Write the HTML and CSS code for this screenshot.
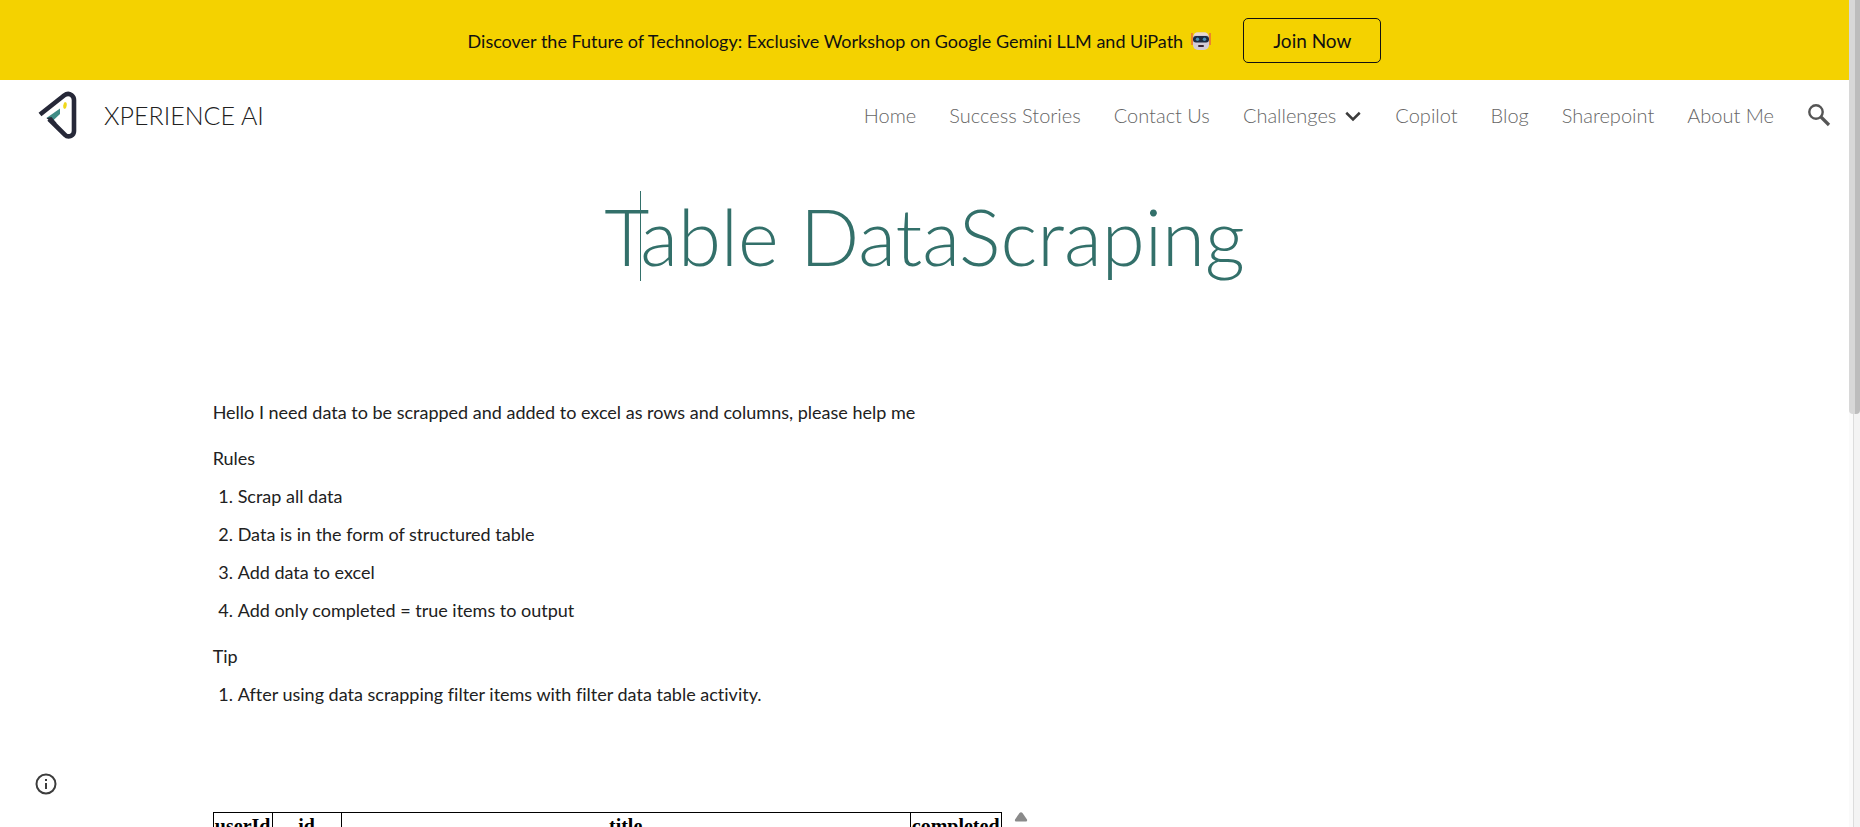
FILE: index.html
```html
<!DOCTYPE html>
<html lang="en">
<head>
<meta charset="utf-8">
<title>XPERIENCE AI - Table DataScraping</title>
<link rel="stylesheet" href="styles.css">
</head>
<body>
<div class="window">
  <div class="page">
    <div class="banner">
      <p class="banner-text">Discover the Future of Technology: Exclusive Workshop on Google Gemini LLM and UiPath
        <svg class="robot" viewBox="0 0 20 20" role="img" aria-label="robot">
          <path d="M1 2v12M19 2v12" stroke="#e8643c" stroke-width="1.4"/>
          <rect x="2" y="1.500" width="16" height="17.500" rx="5" fill="#d3cbd6"/>
          <path d="M3 4q0-2 3-2.500h8q3 .5 3 2.500z" fill="#e9d9cf"/>
          <rect x="2" y="5" width="16" height="6.500" rx="3" fill="#1d2940"/>
          <circle cx="6.500" cy="8.200" r="1.700" fill="#4c8fb5"/>
          <circle cx="13.500" cy="8.200" r="1.700" fill="#4c8fb5"/>
          <rect x="7" y="14" width="6" height="2" rx="1" fill="#3a2630"/>
        </svg>
      </p>
      <button class="join" type="button">Join Now</button>
    </div>
    <header class="header">
      <a class="brand" href="#">
        <svg class="logo" viewBox="0 0 40 48" aria-hidden="true">
          <path d="M2 23.500 26 4.500Q30 1.500 33.500 4 36 6 36 9v31q0 3.500-3 4.800-3.500 1.500-6-1L11 28" fill="none" stroke="#262838" stroke-width="4.600"/>
          <path d="M8.500 27 22 17.500v5.500l-8 7.500z" fill="#3f8c86"/>
          <path d="M8.500 27l5-1 5 6-2 2z" fill="#262838"/>
          <ellipse cx="27" cy="14.500" rx="1.700" ry="3.400" fill="#f0d81c" transform="rotate(8 27 14.500)"/>
        </svg>
        <span>XPERIENCE AI</span>
      </a>
      <nav class="nav">
        <a href="#">Home</a>
        <a href="#">Success Stories</a>
        <a href="#">Contact Us</a>
        <a class="expandable" href="#">Challenges
          <svg class="chevron" viewBox="0 0 16 16" aria-hidden="true"><path d="M2 6l6 6 6-6" fill="none" stroke="#3c3c3c" stroke-width="2.200"/></svg>
        </a>
        <a href="#">Copilot</a>
        <a href="#">Blog</a>
        <a href="#">Sharepoint</a>
        <a href="#">About Me</a>
        <button class="search" type="button" aria-label="Search">
          <svg viewBox="0 0 24 24" aria-hidden="true"><circle cx="9" cy="9" r="6.700" fill="none" stroke="#555" stroke-width="2.400"/><path d="M14 14l8 8" stroke="#555" stroke-width="3.200"/></svg>
        </button>
      </nav>
    </header>
    <section class="hero">
      <h1>Table DataScraping</h1>
    </section>
    <main class="content">
      <p>Hello I need data to be scrapped and added to excel as rows and columns, please help me</p>
      <p>Rules</p>
      <ol>
        <li>Scrap all data</li>
        <li>Data is in the form of structured table</li>
        <li>Add data to excel</li>
        <li>Add only completed = true items to output</li>
      </ol>
      <p>Tip</p>
      <ol>
        <li>After using data scrapping filter items with filter data table activity.</li>
      </ol>
      <div class="embed">
        <table>
          <colgroup><col class="col-user"><col class="col-id"><col><col class="col-done"></colgroup>
          <thead><tr><th>userId</th><th>id</th><th>title</th><th>completed</th></tr></thead>
        </table>
        <svg class="arrow" viewBox="0 0 14 10" aria-hidden="true"><path d="M5.500 1Q7-.5 8.500 1L13 7.500Q13.500 9.500 12 9.500H2Q.5 9.500 1 7.500z" fill="#8a8a8a"/></svg>
      </div>
    </main>
  </div>
  <div class="scrollbar" aria-hidden="true"><div class="thumb"></div></div>
  <button class="info" type="button" aria-label="Site information">
    <svg viewBox="0 0 22 22" aria-hidden="true"><circle cx="11" cy="11" r="9.500" fill="none" stroke="#3c3c3c" stroke-width="2"/><path d="M11 6v2M11 10v6" stroke="#3c3c3c" stroke-width="2"/></svg>
  </button>
</div>
</body>
</html>
```

FILE: styles.css
```css
* { box-sizing: border-box; }
body { margin: 0; font-family: Lato, "Liberation Sans", sans-serif; font-variant-ligatures: none; background: #fff; color: #212121; }
a { color: inherit; text-decoration: none; }
p, h1, ol { margin: 0; }
button { font: inherit; color: inherit; background: none; border: 0; padding: 0; cursor: pointer; }
svg { display: block; }

.window { display: flex; height: 100vh; overflow: hidden; }
.page { flex: 1; min-width: 0; }

.banner { display: flex; align-items: center; justify-content: center; gap: 32px; height: 80px; padding-top: 1px; background: #f4d200; color: #111; font-size: 18px; }
.banner-text { display: flex; align-items: center; gap: 8px; }
.robot { width: 20px; height: 20px; }
.join { height: 45px; padding: 0 29px; border: 1px solid #111; border-radius: 5px; font-size: 19px; line-height: 24px; }

.header { display: flex; align-items: center; justify-content: space-between; height: 70px; padding: 0 18px 0 38px; }
.brand { display: flex; align-items: center; gap: 26px; font-size: 25px; font-weight: 300; }
.logo { width: 40px; height: 48px; }
.nav { display: flex; align-items: center; gap: 33px; font-size: 20px; font-weight: 300; color: #666; }
.expandable { display: flex; align-items: center; gap: 8px; }
.chevron { width: 18px; height: 18px; }
.search svg { width: 24px; height: 24px; }

.hero { padding: 41px 0 40px; text-align: center; }
h1 { position: relative; display: inline-block; vertical-align: top; font-size: 78px; font-weight: 300; line-height: 90px; color: #33706a; }
h1::before { content: ""; position: absolute; top: 0; left: 36px; width: 1px; height: 90px; background: #33706a; }

.content { margin: 0 auto; width: 77%; padding-top: 60px; font-size: 18px; line-height: 30px; }
.content p { margin-top: 16px; }
.content ol { padding-left: 25px; }
.content li { margin-top: 8px; }
.embed { display: flex; align-items: flex-start; gap: 12px; margin-top: 103px; }
table { width: 789px; border-collapse: collapse; table-layout: fixed; font: 20px/24px "Liberation Serif", serif; color: #000; }
th { border: 1px solid #000; padding: 1px; }
.col-user { width: 59px; }
.col-id { width: 69px; }
.col-done { width: 91px; }
.arrow { width: 14px; height: 10px; }

.scrollbar { flex: 0 0 11px; background: linear-gradient(to right, #fafafa 4px, #dcdcdc 4px, #dcdcdc 5px, #f3f3f3 5px); }
.thumb { height: 50%; background: linear-gradient(to right, #d8d8d8 6px, #bdbdbd 6px); border-radius: 0 0 4px 4px; }
.info { position: fixed; left: 35px; bottom: 32px; }
.info svg { width: 22px; height: 22px; }
```
